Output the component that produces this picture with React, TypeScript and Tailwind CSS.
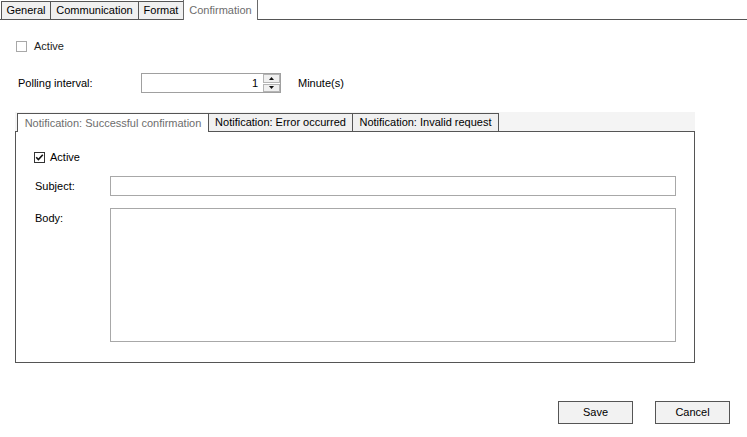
import React from 'react'

function TopTab({ label, w, selected }: { label: string; w: string; selected?: boolean }) {
  if (selected) {
    return (
      <div
        className={`${w} h-[21px] -mb-px flex items-center justify-center border border-b-0 border-[#6a6a6a] bg-white text-[#6d6d6d] relative z-10`}
      >
        {label}
      </div>
    )
  }
  return (
    <div
      className={`${w} h-[19px] -mb-px flex items-center justify-center border border-r-0 border-[#555] bg-[#f0f0f0] text-black`}
    >
      {label}
    </div>
  )
}

function Check({ checked, light }: { checked?: boolean; light?: boolean }) {
  return (
    <div
      className={`w-[11px] h-[11px] border bg-white flex items-center justify-center ${
        light ? 'border-[#a8a8a8]' : 'border-[#333]'
      }`}
    >
      {checked && (
        <svg width="9" height="9" viewBox="0 0 9 9">
          <path d="M1.2 4.3 L3.4 6.6 L7.8 1.8" fill="none" stroke="#111" strokeWidth="1.6" />
        </svg>
      )}
    </div>
  )
}

function Spinner() {
  return (
    <div className="flex flex-col w-[17px] h-[18px] gap-px">
      <div className="flex-1 flex items-center justify-center bg-[#f0f0f0] border border-[#b4b4b4]">
        <svg width="5" height="3" viewBox="0 0 5 3">
          <path d="M0 3 L2.5 0 L5 3 Z" fill="#111" />
        </svg>
      </div>
      <div className="flex-1 flex items-center justify-center bg-[#f0f0f0] border border-[#b4b4b4]">
        <svg width="5" height="3" viewBox="0 0 5 3">
          <path d="M0 0 L2.5 3 L5 0 Z" fill="#111" />
        </svg>
      </div>
    </div>
  )
}

export default function App() {
  return (
    <div className="w-[747px] h-[437px] bg-white overflow-hidden flex flex-col text-[11px] text-black font-['Liberation_Sans',Arial,sans-serif]">
      {/* Top tabs */}
      <div className="flex items-end h-[20px] border-b border-[#555] pl-[1px]">
        <TopTab label="General" w="w-[49px]" />
        <TopTab label="Communication" w="w-[88px]" />
        <TopTab label="Format" w="w-[45px]" />
        <TopTab label="Confirmation" w="w-[75px]" selected />
      </div>

      {/* Active */}
      <div className="flex items-center h-[11px] mt-[21px] ml-[16px] gap-[7px]">
        <Check light />
        <span className="text-[#222]">Active</span>
      </div>

      {/* Polling interval */}
      <div className="flex items-center h-[20px] mt-[21px] ml-[18px]">
        <span className="w-[123px]">Polling interval:</span>
        <div className="w-[140px] h-[20px] border border-[#a0a0a0] flex items-center justify-end">
          <span className="mr-[5px]">1</span>
          <Spinner />
        </div>
        <span className="ml-[17px]">Minute(s)</span>
      </div>

      {/* Inner tab control */}
      <div className="mt-[19px] ml-[15px] w-[680px] flex flex-col">
        <div className="flex items-end h-[19px] bg-[#f4f4f4] pl-[2px]">
          <div className="w-[192px] h-[19px] -mb-px flex items-center justify-center border border-b-0 border-[#555] bg-white text-[#6d6d6d] relative z-10">
            Notification: Successful confirmation
          </div>
          <div className="w-[144px] h-[19px] -mb-px flex items-center justify-center border border-l-0 border-[#555] bg-[#f0f0f0]">
            Notification: Error occurred
          </div>
          <div className="w-[146px] h-[19px] -mb-px flex items-center justify-center border border-l-0 border-[#555] bg-[#f0f0f0]">
            Notification: Invalid request
          </div>
        </div>
        <div className="h-[232px] border border-[#555] flex flex-col pt-[20px]">
          <div className="flex items-center h-[11px] ml-[18px] gap-[5px]">
            <Check checked />
            <span>Active</span>
          </div>
          <div className="flex items-center h-[20px] mt-[13px] ml-[19px]">
            <span className="w-[75px]">Subject:</span>
            <div className="w-[566px] h-[20px] border border-[#a8a8a8]" />
          </div>
          <div className="flex mt-[12px] ml-[19px]">
            <span className="w-[75px] pt-[2px]">Body:</span>
            <div className="w-[566px] h-[134px] border border-[#a8a8a8]" />
          </div>
        </div>
      </div>

      {/* Buttons */}
      <div className="flex justify-end gap-[22px] mt-[38px] pr-[17px]">
        <button className="w-[75px] h-[23px] border border-[#555] bg-[#f2f2f2] text-[11px]">Save</button>
        <button className="w-[75px] h-[23px] border border-[#555] bg-[#f2f2f2] text-[11px]">Cancel</button>
      </div>
    </div>
  )
}
